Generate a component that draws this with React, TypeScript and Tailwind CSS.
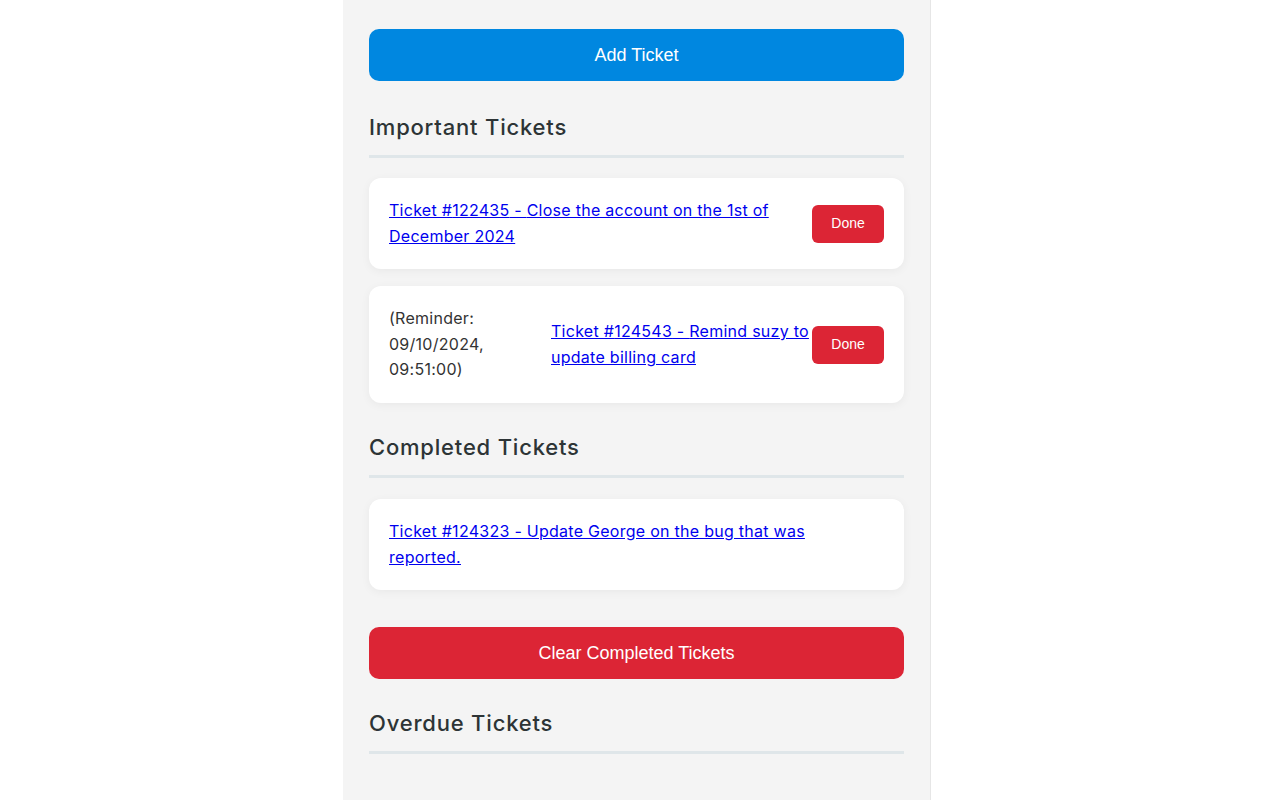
export default function App() {
  const important = [
    { id: '122435', text: 'Close the account on the 1st of December 2024' },
    {
      id: '124543',
      text: 'Remind suzy to update billing card',
      reminder: '(Reminder: 09/10/2024, 09:51:00)',
    },
  ];

  return (
    <div className="min-h-[800px] bg-white font-['Inter',sans-serif] text-[#333]">
      <div className="ml-[343px] w-[588px] min-h-[800px] border-r border-[#e6e6e6] bg-[#f4f4f4] px-[26px] pt-[29px]">
        <button className="h-[52px] w-full rounded-[10px] bg-[#0087e0] font-['Liberation_Sans',sans-serif] text-[18px] text-white">
          Add Ticket
        </button>

        {/* Important */}
        <h2 className="mt-[33px] border-b-[3px] border-[#dfe6e9] pb-[15px] text-[22px] font-medium leading-[26px] tracking-[0.8px] text-[#2d3436]">
          Important Tickets
        </h2>
        <div className="mt-[20px] flex flex-col gap-[17px]">
          {important.map((t) => (
            <div
              key={t.id}
              className="flex items-center rounded-[12px] bg-white p-5 text-[16px] leading-[25.6px] tracking-[0.27px] shadow-[0_2px_10px_rgba(0,0,0,0.05)]"
            >
              {t.reminder && (
                <span className="w-[162px] shrink-0 pr-[12px] text-[#333]">{t.reminder}</span>
              )}
              <a href="#" className="flex-1 text-[#0000ee] underline">
                Ticket #{t.id} - {t.text}
              </a>
              <button className="h-[38px] w-[72px] shrink-0 rounded-[6px] bg-[#dc2535] font-['Liberation_Sans',sans-serif] text-[14px] tracking-normal text-white">
                Done
              </button>
            </div>
          ))}
        </div>

        {/* Completed */}
        <h2 className="mt-[31px] border-b-[3px] border-[#dfe6e9] pb-[15px] text-[22px] font-medium leading-[26px] tracking-[0.8px] text-[#2d3436]">
          Completed Tickets
        </h2>
        <div className="mt-[21px] rounded-[12px] bg-white p-5 pr-[80px] text-[16px] leading-[25.6px] tracking-[0.27px] shadow-[0_2px_10px_rgba(0,0,0,0.05)]">
          <a href="#" className="text-[#0000ee] underline">
            Ticket #124323 - Update George on the bug that was reported.
          </a>
        </div>

        <button className="mt-[37px] h-[52px] w-full rounded-[10px] bg-[#dc2535] font-['Liberation_Sans',sans-serif] text-[18px] text-white">
          Clear Completed Tickets
        </button>

        {/* Overdue */}
        <h2 className="mt-[31px] border-b-[3px] border-[#dfe6e9] pb-[15px] text-[22px] font-medium leading-[26px] tracking-[0.8px] text-[#2d3436]">
          Overdue Tickets
        </h2>
      </div>
    </div>
  );
}
